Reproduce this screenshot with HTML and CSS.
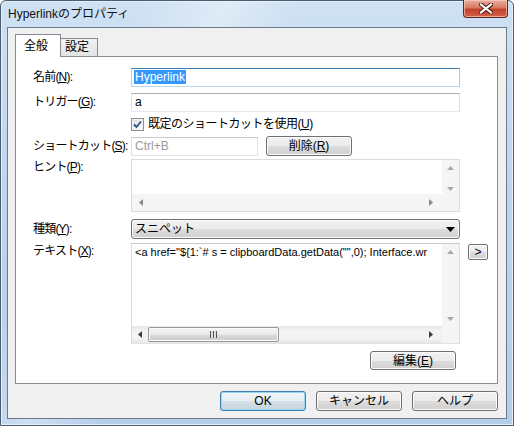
FILE: index.html
```html
<!DOCTYPE html>
<html lang="ja">
<head>
    <meta charset="UTF-8">
    <title>Hyperlinkのプロパティ</title>
    <link rel="stylesheet" href="styles.css">
</head>
<body>
    <div class="window">
        <!-- Title bar -->
        <div class="titlebar">
            <span class="title">Hyperlinkのプロパティ</span>
            <button class="close">
                <svg width="14" height="11" viewBox="0 0 14 11">
                    <path d="M2 1.5 L12 9.5 M12 1.5 L2 9.5" stroke="#4a1b12" stroke-width="4.2" stroke-linecap="square"/>
                    <path d="M2 1.5 L12 9.5 M12 1.5 L2 9.5" stroke="#ffffff" stroke-width="2.2" stroke-linecap="square"/>
                </svg>
            </button>
        </div>

        <!-- Client area -->
        <div class="client">
            <div class="tabs">
                <div class="tab active">全般</div>
                <div class="tab">設定</div>
            </div>

            <div class="panel">
                <div class="row r-name">
                    <span class="lbl">名前(<u>N</u>):</span>
                    <div class="field focus"><span class="sel">Hyperlink</span></div>
                </div>

                <div class="row r-trigger">
                    <span class="lbl">トリガー(<u>G</u>):</span>
                    <div class="field">a</div>
                </div>

                <div class="row r-check">
                    <span class="lbl"></span>
                    <span class="checkbox">
                        <svg width="9" height="9" viewBox="0 0 9 9">
                            <path d="M1 4.5 L3.5 7 L8 1.5" fill="none" stroke="#2a4b8d" stroke-width="1.8"/>
                        </svg>
                    </span>
                    <span class="check-text">既定のショートカットを使用(<u>U</u>)</span>
                </div>

                <div class="row r-shortcut">
                    <span class="lbl">ショートカット(<u>S</u>):</span>
                    <div class="field short disabled">Ctrl+B</div>
                    <button class="btn btn-del">削除(<u>R</u>)</button>
                </div>

                <div class="row top r-hint">
                    <span class="lbl">ヒント(<u>P</u>):</span>
                    <div class="field box hint">
                        <div class="box-text"></div>
                        <div class="vscroll">
                            <svg class="arr" width="7" height="4"><path d="M3.5 0 L7 4 H0Z"/></svg>
                            <svg class="arr" width="7" height="4"><path d="M0 0 H7 L3.5 4Z"/></svg>
                        </div>
                        <div class="hscroll">
                            <svg class="arr" width="4" height="7"><path d="M4 0 V7 L0 3.5Z"/></svg>
                            <svg class="arr" width="4" height="7"><path d="M0 0 V7 L4 3.5Z"/></svg>
                        </div>
                        <div class="corner"></div>
                    </div>
                </div>

                <div class="row r-kind">
                    <span class="lbl">種類(<u>Y</u>):</span>
                    <div class="select">
                        <span>スニペット</span>
                        <svg width="9" height="5"><path d="M0 0 H9 L4.5 5Z" fill="#000"/></svg>
                    </div>
                </div>

                <div class="row top r-text">
                    <span class="lbl">テキスト(<u>X</u>):</span>
                    <div class="field box code">
                        <div class="box-text">&lt;a href="${1:`# s = clipboardData.getData("",0); Interface.wr</div>
                        <div class="vscroll">
                            <svg class="arr" width="7" height="4"><path d="M3.5 0 L7 4 H0Z"/></svg>
                            <svg class="arr" width="7" height="4"><path d="M0 0 H7 L3.5 4Z"/></svg>
                        </div>
                        <div class="hscroll active">
                            <svg class="arr" width="4" height="7"><path d="M4 0 V7 L0 3.5Z"/></svg>
                            <div class="thumb"><span class="grip"></span></div>
                            <svg class="arr arr-right" width="4" height="7"><path d="M0 0 V7 L4 3.5Z"/></svg>
                        </div>
                        <div class="corner"></div>
                    </div>
                    <button class="btn btn-more">&gt;</button>
                </div>

                <div class="row r-edit">
                    <button class="btn btn-edit">編集(<u>E</u>)</button>
                </div>
            </div>

            <div class="footer">
                <button class="btn btn-foot default">OK</button>
                <button class="btn btn-foot">キャンセル</button>
                <button class="btn btn-foot">ヘルプ</button>
            </div>
        </div>
    </div>
</body>
</html>
```

FILE: styles.css
```css
* {
    margin: 0;
    padding: 0;
    box-sizing: border-box;
}

body {
    width: 514px;
    height: 426px;
    overflow: hidden;
    font-family: "Liberation Sans", "Noto Sans CJK JP", sans-serif;
    font-size: 12px;
    line-height: 17px;
    color: #000;
    background: #fff;
}

u {
    text-decoration: underline;
    text-underline-offset: 1px;
}

/* Window frame */
.window {
    width: 514px;
    height: 426px;
    border: 1px solid #4b5d70;
    border-radius: 6px 6px 0 0;
    padding: 0 6px 6px;
    display: flex;
    flex-direction: column;
    background:
        linear-gradient(115deg, rgba(255, 255, 255, 0) 20%, rgba(255, 255, 255, 0.35) 32%, rgba(255, 255, 255, 0) 42%),
        linear-gradient(180deg, #cfe1f3 0%, #bfd6ee 40%, #b4cde9 100%);
    box-shadow: inset 0 0 0 1px #e6f0fa;
}

.titlebar {
    height: 26px;
    display: flex;
    justify-content: space-between;
    align-items: flex-start;
}

.title {
    padding: 5px 0 0 1px;
    font-size: 12px;
    color: #111;
}

.close {
    width: 45px;
    height: 18px;
    margin-top: -1px;
    margin-right: -1px;
    border: 1px solid #5b2a20;
    border-top: none;
    border-radius: 0 0 4px 4px;
    background: linear-gradient(180deg, #e8b0a0 0%, #d87a62 45%, #c3412a 55%, #d2624a 100%);
    box-shadow: inset 0 0 0 1px rgba(255, 210, 195, 0.6);
    display: flex;
    align-items: center;
    justify-content: center;
}

/* Client area */
.client {
    flex: 1;
    border: 1px solid #6a7a8a;
    background: #f0f0f0;
    padding: 6px 8px 0 7px;
    display: flex;
    flex-direction: column;
}

.tabs {
    height: 22px;
    display: flex;
    align-items: flex-end;
}

.tab {
    position: relative;
    height: 18px;
    padding: 0 8px 0 4px;
    border: 1px solid #898c95;
    border-bottom: none;
    border-left: none;
    background: linear-gradient(180deg, #f2f2f2 0%, #e3e3e3 100%);
    line-height: 17px;
}

.tab.active {
    z-index: 1;
    height: 23px;
    width: 46px;
    padding: 3px 0 0 8px;
    margin-bottom: -1px;
    border-left: 1px solid #898c95;
    background: #fff;
}

.panel {
    height: 328px;
    border: 1px solid #898c95;
    background: #fff;
    padding: 11px 0 0 17px;
}

.row {
    display: flex;
    align-items: center;
}

.row.top {
    align-items: flex-start;
}

.r-name { height: 19px; }
.r-trigger { height: 19px; margin-top: 6px; }
.r-check { height: 13px; margin-top: 6px; }
.r-shortcut { height: 20px; margin-top: 5px; }
.r-hint { height: 53px; margin-top: 3px; }
.r-kind { height: 20px; margin-top: 7px; }
.r-text { height: 101px; margin-top: 4px; }
.r-edit { height: 19px; margin-top: 7px; padding-left: 337px; }

.lbl {
    width: 98px;
    height: 17px;
    flex: none;
    white-space: nowrap;
    letter-spacing: -0.8px;
}

/* Text fields */
.field {
    width: 329px;
    height: 19px;
    border: 1px solid;
    border-color: #abadb3 #dbdfe6 #e3e9ef #e2e3ea;
    background: #fff;
    padding: 0 3px;
    white-space: nowrap;
    overflow: hidden;
}

.field.focus {
    border-color: #3d7bad #a4c9e3 #b7d9ed #b5cfe7;
    padding-left: 2px;
}

.sel {
    background: #3399ff;
    color: #fff;
    padding: 0 1px;
}

.field.short {
    width: 127px;
}

.field.disabled {
    color: #9a9a9a;
    border-color: #c8c8c8 #e0e0e0 #e6e6e6 #e0e0e0;
}

.checkbox {
    width: 13px;
    height: 13px;
    border: 1px solid #8e8f8f;
    background: linear-gradient(135deg, #dcdcdc 0%, #ffffff 100%);
    box-shadow: inset 0 0 0 1px #f4f4f4;
    display: flex;
    align-items: center;
    justify-content: center;
}

.check-text {
    margin-left: 4px;
    letter-spacing: -0.5px;
}

/* Multi-line boxes with scroll bars */
.field.box {
    padding: 0;
    display: grid;
    grid-template-columns: 1fr 17px;
    grid-template-rows: 1fr 17px;
    border-color: #dcdcdc;
}

.field.hint {
    height: 53px;
}

.field.code {
    height: 101px;
    border-color: #c9c9c9 #dcdcdc #e3e3e3 #dcdcdc;
}

.box-text {
    padding: 0 3px;
    overflow: hidden;
    white-space: nowrap;
    font-size: 11px;
}

.vscroll {
    grid-row: 1 / 3;
    grid-column: 2;
    background: #f5f5f5;
    display: flex;
    flex-direction: column;
    align-items: center;
    justify-content: space-between;
    padding: 6px 0 20px;
}

.code .vscroll {
    padding-bottom: 22px;
}

.hscroll {
    grid-row: 2;
    grid-column: 1;
    background: #f5f5f5;
    display: flex;
    align-items: center;
    justify-content: space-between;
    padding: 0 9px 0 7px;
}

.corner {
    grid-row: 2;
    grid-column: 2;
    background: #f5f5f5;
}

.arr {
    fill: #a8a8a8;
}

.hscroll .arr {
    fill: #8a8a8a;
}

.hscroll.active {
    background: linear-gradient(180deg, #e6e6e6 0%, #f3f3f3 30%, #f3f3f3 70%, #e6e6e6 100%);
    padding: 0 9px 0 6px;
    justify-content: flex-start;
}

.hscroll.active .arr {
    fill: #3c3c3c;
}

.thumb {
    width: 131px;
    height: 15px;
    margin-left: 6px;
    border: 1px solid #979797;
    border-radius: 2px;
    background: linear-gradient(180deg, #f4f4f4 0%, #e9e9e9 50%, #d9d9d9 51%, #cdcdcd 100%);
    box-shadow: inset 0 0 0 1px #fbfbfb;
    display: flex;
    align-items: center;
    justify-content: center;
}

.grip {
    width: 7px;
    height: 7px;
    background: repeating-linear-gradient(90deg, #555 0 1px, #ddd 1px 3px);
}

.arr-right {
    margin-left: auto;
}

/* Combo box */
.select {
    width: 329px;
    height: 20px;
    border: 1px solid #707070;
    border-radius: 3px;
    background: linear-gradient(180deg, #f2f2f2 0%, #ebebeb 50%, #dddddd 51%, #cfcfcf 100%);
    box-shadow: inset 0 0 0 1px #fbfbfb;
    display: flex;
    align-items: center;
    justify-content: space-between;
    padding: 0 4px 0 3px;
}

/* Buttons */
.btn {
    height: 20px;
    border: 1px solid #707070;
    border-radius: 3px;
    background: linear-gradient(180deg, #f2f2f2 0%, #ebebeb 50%, #dddddd 51%, #cfcfcf 100%);
    box-shadow: inset 0 0 0 1px #fbfbfb;
    font-family: inherit;
    font-size: 12px;
    line-height: 16px;
    color: #000;
}

.btn-del {
    width: 86px;
    margin-left: 8px;
}

.btn-more {
    width: 20px;
    height: 16px;
    margin: 1px 0 0 8px;
    line-height: 12px;
    border-radius: 2px;
}

.btn-edit {
    width: 86px;
    height: 19px;
}

.footer {
    margin-top: 7px;
    display: flex;
    justify-content: flex-end;
    gap: 10px;
}

.btn-foot {
    width: 86px;
}

.btn.default {
    border-color: #3c7fb1;
    box-shadow: inset 0 0 0 1px #98d6f2;
    background: linear-gradient(180deg, #f0f5f8 0%, #e6eef3 50%, #d4dfe7 51%, #c8d5de 100%);
}
```
